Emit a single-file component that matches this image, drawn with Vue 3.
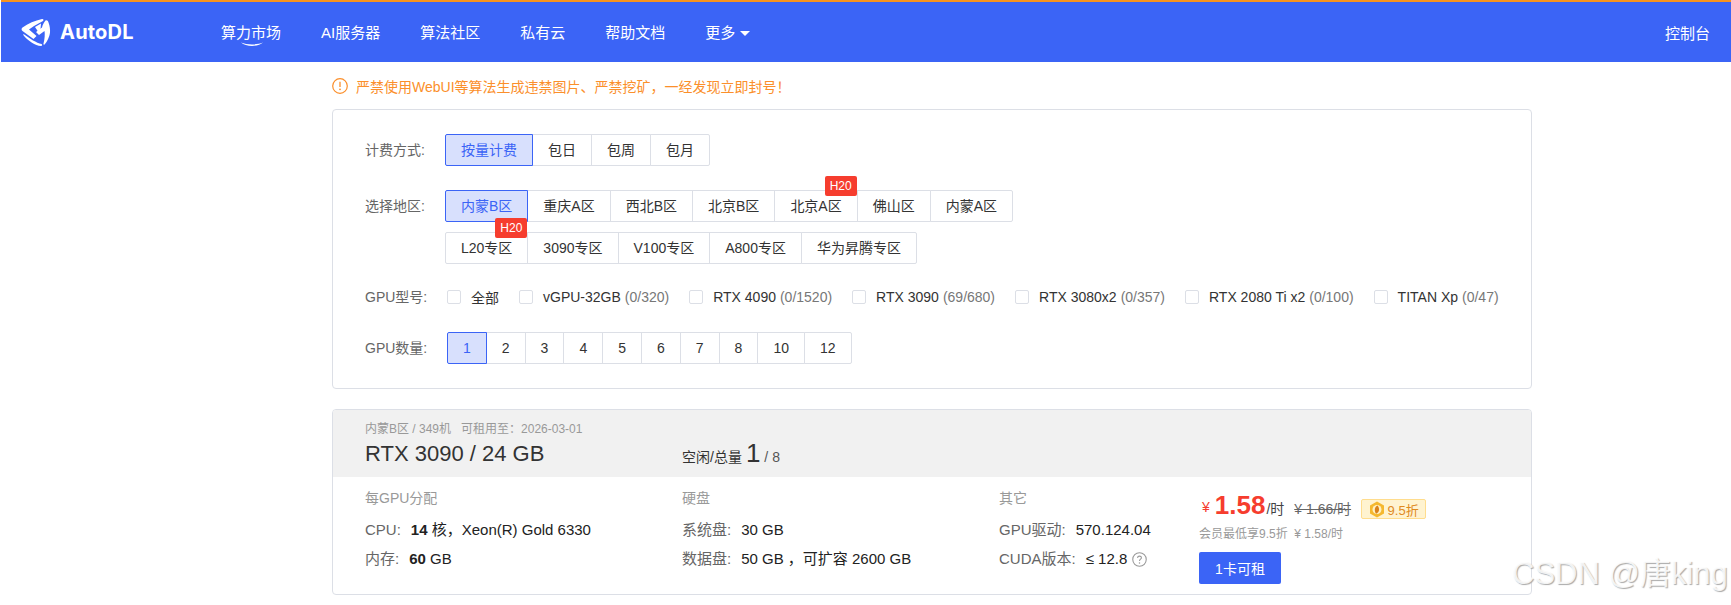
<script setup>
const nav = ['算力市场', 'AI服务器', '算法社区', '私有云', '帮助文档']
const billing = ['按量计费', '包日', '包周', '包月']
const regionRows = [
  [
    { t: '内蒙B区', on: true },
    { t: '重庆A区' },
    { t: '西北B区' },
    { t: '北京B区' },
    { t: '北京A区', badge: 'H20' },
    { t: '佛山区' },
    { t: '内蒙A区' }
  ],
  [
    { t: 'L20专区', badge: 'H20' },
    { t: '3090专区' },
    { t: 'V100专区' },
    { t: 'A800专区' },
    { t: '华为昇腾专区' }
  ]
]
const gpus = [
  { n: '全部', c: '' },
  { n: 'vGPU-32GB', c: '(0/320)' },
  { n: 'RTX 4090', c: '(0/1520)' },
  { n: 'RTX 3090', c: '(69/680)' },
  { n: 'RTX 3080x2', c: '(0/357)' },
  { n: 'RTX 2080 Ti x2', c: '(0/100)' },
  { n: 'TITAN Xp', c: '(0/47)' }
]
const counts = [1, 2, 3, 4, 5, 6, 7, 8, 10, 12]
</script>

<template>
  <div class="page">
    <header class="top">
      <div class="logo">
        <svg class="logo-mark" width="30" height="29" viewBox="0 0 30 29">
          <path fill="#fff" d="M1.500 9.500C7 5.500 14 2.500 21 1c1.500-.2 2 1 1 2l-9 5-5 3.500 7.500 6.500-3 3-11-8C.3 12 .3 10.500 1.500 9.500Z" />
          <path fill="#fff" d="M24.500 2.500c1.500-.5 2.500.5 3 2 1.300 3.500 1.800 7 1.500 10-.5 4.500-3 9.500-5.500 12-.5.5-1.500 0-1-1 1.300-4.500 1.500-9.500 1-12.500L18 17l-3-3 6-4.500c.5-2.500 2-5.500 3.500-7Z" />
          <path fill="#fff" d="M2.500 16 12 22.500c3 1.500 6 3 8.500 3.500 1 .3 1 2-.5 2C14 27.500 7.500 23 3.500 18.500c-1-1-1.500-2-1-2.500Z" />
          <path fill="#fff" d="M14 9l6-3.500-.5 6-2.500 2Z" />
        </svg>
        <span class="logo-text">AutoDL</span>
      </div>
      <nav class="nav">
        <a v-for="(n, i) in nav" :key="n" class="nav-item">
          {{ n }}
          <svg v-if="i === 0" class="smile" width="22" height="5" viewBox="0 0 22 5">
            <path d="M0 .5C6 3 16 3 22 .5 17 5 5 5 0 .5Z" fill="#fff" />
          </svg>
        </a>
        <a class="nav-item more">更多<i class="caret"></i></a>
      </nav>
      <a class="console">控制台</a>
    </header>

    <main class="wrap">
      <div class="warn">
        <svg width="16" height="16" viewBox="0 0 16 16">
          <circle cx="8" cy="8" r="7.300" fill="none" stroke="#fb8f2b" stroke-width="1.200" />
          <path d="M8 3.800v5.200" stroke="#fb8f2b" stroke-width="1.300" />
          <circle cx="8" cy="11.300" r=".9" fill="#fb8f2b" />
        </svg>
        <span>严禁使用WebUI等算法生成违禁图片、严禁挖矿，一经发现立即封号！</span>
      </div>

      <section class="filter card">
        <div class="row">
          <div class="row-label">计费方式:</div>
          <div class="group">
            <div v-for="(b, i) in billing" :key="b" class="opt" :class="{ on: i === 0 }">{{ b }}</div>
          </div>
        </div>
        <div class="row region">
          <div class="row-label">选择地区:</div>
          <div class="stack">
            <div v-for="(r, ri) in regionRows" :key="ri" class="group">
              <div v-for="o in r" :key="o.t" class="opt" :class="{ on: o.on }">
                {{ o.t }}<span v-if="o.badge" class="badge">{{ o.badge }}</span>
              </div>
            </div>
          </div>
        </div>
        <div class="row gpu">
          <div class="row-label">GPU型号:</div>
          <div class="checks">
            <label v-for="g in gpus" :key="g.n" class="check">
              <i class="box"></i>
              <span class="name">{{ g.n }}</span>
              <span v-if="g.c" class="cnt">{{ g.c }}</span>
            </label>
          </div>
        </div>
        <div class="row qty">
          <div class="row-label">GPU数量:</div>
          <div class="group">
            <div v-for="(c, i) in counts" :key="c" class="opt" :class="{ on: i === 0 }">{{ c }}</div>
          </div>
        </div>
      </section>

      <section class="host card">
        <div class="host-head">
          <div class="col-a">
            <div class="meta">内蒙B区 / 349机&nbsp;&nbsp;&nbsp;可租用至：2026-03-01</div>
            <div class="title">RTX 3090 / 24 GB</div>
          </div>
          <div class="free">
            <span class="free-l">空闲/总量</span>
            <span class="free-n">1</span>
            <span class="free-t">/ 8</span>
          </div>
        </div>
        <div class="host-body">
          <div class="col col-a">
            <div class="col-h">每GPU分配</div>
            <div class="line"><span class="k">CPU:</span><b>14</b><em> 核，Xeon(R) Gold 6330</em></div>
            <div class="line"><span class="k">内存:</span><b>60</b><em> GB</em></div>
          </div>
          <div class="col col-b">
            <div class="col-h">硬盘</div>
            <div class="line"><span class="k">系统盘:</span><em>30 GB</em></div>
            <div class="line"><span class="k">数据盘:</span><em>50 GB ，可扩容 2600 GB</em></div>
          </div>
          <div class="col col-c">
            <div class="col-h">其它</div>
            <div class="line"><span class="k">GPU驱动:</span><em>570.124.04</em></div>
            <div class="line"><span class="k">CUDA版本:</span><em>≤ 12.8</em>
              <svg class="help" width="15" height="15" viewBox="0 0 14 14">
                <circle cx="7" cy="7" r="6.300" fill="none" stroke="#999" />
                <path d="M5.200 5.500C5.200 3.300 8.800 3.400 8.800 5.400 8.800 6.700 7 6.700 7 8.300" fill="none" stroke="#999" />
                <circle cx="7" cy="10.200" r=".7" fill="#999" />
              </svg>
            </div>
          </div>
          <div class="col price">
            <div class="price-line">
              <span class="yen">¥</span><span class="big">1.58</span><span class="unit">/时</span>
              <s class="old">¥ 1.66/时</s>
              <span class="disc">
                <svg width="16" height="17" viewBox="0 0 16 17">
                  <path d="M8 .5 15 4.500v8L8 16.500 1 12.500v-8Z" fill="#f5b82e" />
                  <circle cx="8" cy="8.500" r="4.500" fill="#fff0c2" />
                  <path d="M8.500 4.500C5.500 5.500 5 10 7 12.800 10.500 11.500 11 7.500 8.500 4.500Z" fill="#d9811a" />
                </svg>
                9.5折
              </span>
            </div>
            <div class="member">会员最低享9.5折&nbsp;&nbsp;¥ 1.58/时</div>
            <button class="rent">1卡可租</button>
          </div>
        </div>
      </section>
    </main>
    <div class="mark">CSDN @唐king</div>
  </div>
</template>

<style>
html, body { margin: 0; background: #fff; overflow: hidden; }
</style>

<style scoped>
.page {
  position: relative;
  width: 1731px;
  height: 605px;
  overflow: hidden;
  font-family: "Liberation Sans", "Noto Sans CJK SC", sans-serif;
  font-size: 14px;
  color: #333;
}
.top {
  height: 60px;
  border-top: 2px solid #f7931e;
  background: #3b64f6;
  display: flex;
  align-items: center;
  color: #fff;
  margin-left: 1px;
  padding-right: 21px;
}
.logo { display: flex; align-items: center; width: 220px; padding-left: 20px; box-sizing: border-box; gap: 9px; }
.logo-text { font-family: Inter, "Liberation Sans", sans-serif; font-weight: 700; font-size: 20px; letter-spacing: .2px; }
.nav { display: flex; gap: 40px; flex: 1; font-size: 15px; margin-top: -1px; }
.nav-item { position: relative; white-space: nowrap; }
.smile { position: absolute; left: 20px; top: 21px; }
.more { display: flex; align-items: center; gap: 5px; }
.caret { width: 0; height: 0; border: 5px solid transparent; border-top: 5px solid #fff; border-bottom: 0; margin-top: 3px; }
.console { font-size: 15px; }

.wrap { width: 1200px; margin-left: 332px; }
.warn {
  height: 47px;
  display: flex;
  align-items: center;
  gap: 8px;
  color: #fb8f2b;
  font-size: 14px;
}
.card { border: 1px solid #dcdfe6; border-radius: 4px; box-sizing: border-box; }
.filter { height: 280px; padding: 24px 32px 0; }
.row { display: flex; }
.row-label { width: 80px; color: #666; line-height: 32px; flex: none; }
.group { display: flex; }
.stack { display: flex; flex-direction: column; gap: 10px; }
.region { margin-top: 24px; }
.opt {
  position: relative;
  height: 32px;
  line-height: 30px;
  box-sizing: border-box;
  padding: 0 15px;
  border: 1px solid #dcdfe6;
  margin-left: -1px;
  background: #fff;
  white-space: nowrap;
  color: #333;
}
.opt:first-child { margin-left: 0; border-radius: 2px 0 0 2px; }
.opt:last-child { border-radius: 0 2px 2px 0; }
.opt.on { background: #d8e0fd; border-color: #3b64f6; color: #3b64f6; z-index: 1; }
.badge {
  position: absolute;
  right: 0;
  top: -15px;
  width: 32px;
  height: 20px;
  line-height: 20px;
  text-align: center;
  background: #f63d2e;
  color: #fff;
  font-size: 12px;
  border-radius: 2px;
  z-index: 2;
}
.gpu { margin-top: 17px; height: 32px; align-items: center; }
.gpu .row-label { width: 82px; }
.checks { display: flex; gap: 20px; }
.check { display: flex; align-items: center; white-space: nowrap; }
.box { width: 12px; height: 12px; border: 1px solid #dcdfe6; border-radius: 2px; margin-right: 10px; }
.name { color: #333; }
.cnt { color: #777; margin-left: 4px; }
.qty { margin-top: 19px; }
.qty .row-label { width: 82px; }

.host { margin-top: 20px; height: 186px; overflow: hidden; }
.host-head {
  height: 67px;
  background: #f1f1f1;
  display: flex;
  padding-left: 32px;
}
.col-a { width: 317px; flex: none; }
.meta { font-size: 12px; color: #999; margin-top: 11px; line-height: 16px; }
.title { font-size: 22px; line-height: 26px; margin-top: 4px; color: #333; }
.free { padding-top: 28px; display: flex; align-items: baseline; gap: 4px; height: 30px; }
.free-l { color: #333; }
.free-n { font-size: 26px; line-height: 30px; }
.free-t { font-size: 14px; color: #555; }
.host-body { display: flex; padding: 11px 0 0 32px; }
.col-h { color: #999; line-height: 20px; margin-bottom: 12px; }
.line { font-size: 15px; line-height: 20px; margin-bottom: 9px; color: #666; white-space: nowrap; display: flex; align-items: center; }
.k { margin-right: 10px; }
.line b { color: #222; font-weight: 700; }
.line em { font-style: normal; color: #222; white-space: pre; }
.col-b { width: 317px; flex: none; }
.col-c { width: 200px; flex: none; }
.help { margin-left: 5px; }
.price { padding-top: 3px; }
.price-line { display: flex; align-items: center; height: 28px; }
.yen { color: #f63d2e; font-size: 14px; margin: 4px 5px 0 3px; }
.big { color: #f63d2e; font-size: 26px; font-weight: 700; }
.unit { font-size: 14px; color: #444; margin: 5px 0 0 1px; }
.old { font-size: 14px; color: #666; margin: 5px 10px 0 10px; }
.disc {
  display: flex;
  align-items: center;
  justify-content: center;
  gap: 3px;
  box-sizing: border-box;
  width: 65px;
  height: 20px;
  background: #fff3d0;
  border: 1px solid #ffdd8e;
  border-radius: 2px;
  color: #e08a1e;
  font-size: 13px;
  margin-top: 8px;
}
.member { font-size: 12px; color: #999; line-height: 16px; margin-top: 7px; }
.rent {
  display: block;
  width: 82px;
  height: 32px;
  margin-top: 10px;
  border: 0;
  border-radius: 2px;
  background: #3b64f6;
  color: #fff;
  font: 14px "Liberation Sans", "Noto Sans CJK SC", sans-serif;
}
.mark {
  position: absolute;
  left: 1512px;
  top: 554px;
  font-size: 31px;
  line-height: 40px;
  color: rgba(255, 255, 255, .85);
  text-shadow: 1px 1px 1px #aaa;
  white-space: nowrap;
}
</style>
